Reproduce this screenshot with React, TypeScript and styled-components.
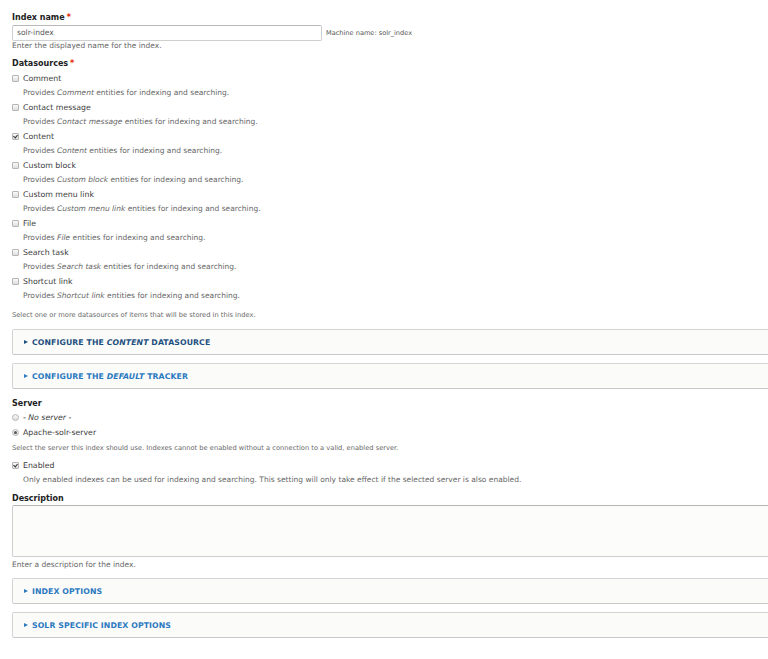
import React from 'react';
import styled, {createGlobalStyle} from 'styled-components';

const GlobalStyle = createGlobalStyle`
    html, body {
        margin: 0;
        padding: 0;
        background: #fff;
        overflow: hidden;
    }
    body {
        font-family: "DejaVu Sans", "Noto Sans", sans-serif;
        color: #333;
    }
`

const Form = styled.form`
    width: 790px;
    padding: 12px 0 0 12px;
    display: flex;
    flex-direction: column;
`
const FieldLabel = styled.div<{ top?: number }>`
    font-size: 8px;
    font-weight: bold;
    line-height: 12px;
    color: #222;
    margin-top: ${p => p.top ?? 0}px;
`
const Required = styled.span`
    color: #e62600;
    margin-left: 2px;
`
const InputRow = styled.div`
    display: flex;
    align-items: center;
    gap: 4px;
    margin-top: 1px;
`
const TextInput = styled.div`
    box-sizing: border-box;
    width: 310px;
    height: 16px;
    border: 1px solid #cfcfcf;
    border-top-color: #b8b8b8;
    border-radius: 2px;
    padding: 0 4px;
    font-size: 7.6px;
    line-height: 14px;
    color: #595959;
`
const Hint = styled.div<{ top?: number }>`
    font-size: 6.7px;
    line-height: 10px;
    color: #6a6a6a;
    margin-top: ${p => p.top ?? 0}px;
`
const Help = styled.div<{ top?: number }>`
    font-size: 7.5px;
    line-height: 10px;
    color: #666;
    margin-top: ${p => p.top ?? 0}px;
`
const MachineName = styled.span`
    font-size: 6.6px;
    color: #555;
`
const ScrollList = styled.div`
    margin-top: 1px;
    height: 234px;
    overflow: hidden;
`
const OptionRow = styled.div<{ top?: number }>`
    display: flex;
    align-items: center;
    gap: 4px;
    height: 15px;
    font-size: 7.8px;
    color: #3b3b3b;
    margin-top: ${p => p.top ?? 0}px;
`
const OptionDesc = styled.div`
    height: 14px;
    line-height: 13px;
    padding-left: 11px;
    font-size: 7.5px;
    color: #666;
    white-space: nowrap;
`
const Box = styled.span<{ checked?: boolean, round?: boolean }>`
    box-sizing: border-box;
    width: 7px;
    height: 7px;
    border: 1px solid #b5b5b5;
    border-radius: ${p => p.round ? '50%' : '1px'};
    background: linear-gradient(#fafafa, #dedede);
    position: relative;
    flex-shrink: 0;
    margin-top: -1px;
    &::after {
        content: '';
        display: ${p => p.checked ? 'block' : 'none'};
        position: absolute;
        ${p => p.round ? `
            left: 1px; top: 1px; width: 3px; height: 3px;
            border-radius: 50%; background: #555;
        ` : `
            left: 1px; top: 0; width: 2px; height: 3px;
            border-right: 1.2px solid #333; border-bottom: 1.2px solid #333;
            transform: rotate(40deg);
        `}
    }
`
const Details = styled.div<{ top: number }>`
    box-sizing: border-box;
    height: 26px;
    margin-top: ${p => p.top}px;
    border: 1px solid #d4d4d4;
    border-bottom-color: #c8c8c8;
    border-radius: 2px;
    background: #fbfbf9;
    display: flex;
    align-items: center;
    padding-left: 11px;
    gap: 4px;
`
const Summary = styled.span<{ dark?: boolean }>`
    font-size: 7.75px;
    font-weight: bold;
    letter-spacing: 0.1px;
    text-transform: uppercase;
    color: ${p => p.dark ? '#1d4f80' : '#2a78c0'};
`
const Arrow = styled.span<{ dark?: boolean }>`
    width: 0;
    height: 0;
    border-top: 2.5px solid transparent;
    border-bottom: 2.5px solid transparent;
    border-left: 4px solid ${p => p.dark ? '#1d4f80' : '#2a78c0'};
`
const TextArea = styled.div`
    box-sizing: border-box;
    height: 52px;
    border: 1px solid #cfcfcf;
    border-top-color: #b5b5b5;
    border-radius: 2px;
    background: #fcfcfb;
`

const datasources = [
    {label: 'Comment', checked: false},
    {label: 'Contact message', checked: false},
    {label: 'Content', checked: true},
    {label: 'Custom block', checked: false},
    {label: 'Custom menu link', checked: false},
    {label: 'File', checked: false},
    {label: 'Search task', checked: false},
    {label: 'Shortcut link', checked: false},
]

const Collapsible: React.FC<{ top: number, dark?: boolean, children: React.ReactNode }> = ({top, dark, children}) => (
    <Details top={top}>
        <Arrow dark={dark}/>
        <Summary dark={dark}>{children}</Summary>
    </Details>
)

export default function App() {
    return (
        <>
            <GlobalStyle/>
            <Form>
                <FieldLabel>Index name<Required>*</Required></FieldLabel>
                <InputRow>
                    <TextInput>solr-index</TextInput>
                    <MachineName>Machine name: solr_index</MachineName>
                </InputRow>
                <Help>Enter the displayed name for the index.</Help>

                <FieldLabel top={7}>Datasources<Required>*</Required></FieldLabel>
                <ScrollList>
                    {datasources.map(d => (
                        <div key={d.label}>
                            <OptionRow><Box checked={d.checked}/>{d.label}</OptionRow>
                            <OptionDesc>Provides <i>{d.label}</i> entities for indexing and searching.</OptionDesc>
                        </div>
                    ))}
                </ScrollList>
                <Hint top={5}>Select one or more datasources of items that will be stored in this index.</Hint>

                <Collapsible top={9} dark>Configure the <i>Content</i> datasource</Collapsible>
                <Collapsible top={8}>Configure the <i>default</i> tracker</Collapsible>

                <FieldLabel top={9}>Server</FieldLabel>
                <OptionRow><Box round/><i>- No server -</i></OptionRow>
                <OptionRow><Box round checked/>Apache-solr-server</OptionRow>
                <Hint top={3}>Select the server this index should use. Indexes cannot be enabled without a connection to a valid, enabled server.</Hint>

                <OptionRow top={5}><Box checked/>Enabled</OptionRow>
                <OptionDesc>Only enabled indexes can be used for indexing and searching. This setting will only take effect if the selected server is also enabled.</OptionDesc>

                <FieldLabel top={6}>Description</FieldLabel>
                <TextArea/>
                <Help top={3}>Enter a description for the index.</Help>

                <Collapsible top={8}>Index options</Collapsible>
                <Collapsible top={8}>Solr specific index options</Collapsible>
            </Form>
        </>
    )
}
